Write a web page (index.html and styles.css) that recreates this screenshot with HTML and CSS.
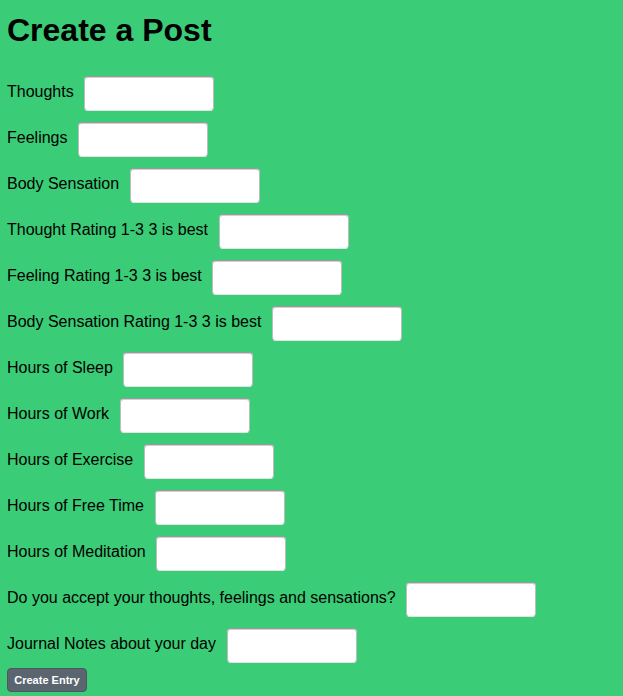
FILE: index.html
```html
<!DOCTYPE html>
<html>
<head>
<meta charset="utf-8">
<title>Create a Post</title>
<link rel="stylesheet" href="styles.css">
</head>
<body>
<h1 class="title">Create a Post</h1>
<form class="post-form">
  <div class="row"><label class="lbl">Thoughts</label><input class="field" type="text"></div>
  <div class="row"><label class="lbl">Feelings</label><input class="field" type="text"></div>
  <div class="row"><label class="lbl">Body Sensation</label><input class="field" type="text"></div>
  <div class="row"><label class="lbl">Thought Rating 1-3 3 is best</label><input class="field" type="text"></div>
  <div class="row"><label class="lbl">Feeling Rating 1-3 3 is best</label><input class="field" type="text"></div>
  <div class="row"><label class="lbl">Body Sensation Rating 1-3 3 is best</label><input class="field" type="text"></div>
  <div class="row"><label class="lbl">Hours of Sleep</label><input class="field" type="text"></div>
  <div class="row"><label class="lbl">Hours of Work</label><input class="field" type="text"></div>
  <div class="row"><label class="lbl">Hours of Exercise</label><input class="field" type="text"></div>
  <div class="row"><label class="lbl">Hours of Free Time</label><input class="field" type="text"></div>
  <div class="row"><label class="lbl">Hours of Meditation</label><input class="field" type="text"></div>
  <div class="row"><label class="lbl">Do you accept your thoughts, feelings and sensations?</label><input class="field" type="text"></div>
  <div class="row"><label class="lbl">Journal Notes about your day</label><input class="field" type="text"></div>
  <div class="actions"><button class="btn" type="button">Create Entry</button></div>
</form>
</body>
</html>
```
FILE: styles.css
```css
html, body {
  margin: 0;
  background: #3acc76;
}
body {
  padding: 12px 7px 0 7px;
  font-family: "Liberation Sans", Arial, Helvetica, sans-serif;
  color: #000;
}
.title {
  margin: 0;
  font-size: 32px;
  line-height: 37px;
  font-weight: bold;
}
.post-form {
  margin-top: 27px;
  display: flex;
  flex-direction: column;
  gap: 11px;
}
.row {
  display: flex;
  align-items: flex-start;
  gap: 10.6px;
  height: 35px;
}
.lbl {
  font-size: 16px;
  line-height: 31px;
}
.field {
  box-sizing: border-box;
  width: 130px;
  height: 35px;
  margin: 0;
  background: #fff;
  border: 1px solid #bdbdbd;
  border-top-color: #9a9a9a;
  border-bottom-color: #e4e4e4;
  border-radius: 4px;
  box-shadow: inset 0 1px 0 #d0d0d0;
}
.actions {
  margin-top: -6px;
}
.btn {
  box-sizing: border-box;
  width: 80px;
  height: 24px;
  padding: 0;
  background: #5b6570;
  color: #fff;
  border: 1px solid #4e5760;
  border-radius: 4px;
  font-family: "Liberation Sans", Arial, Helvetica, sans-serif;
  font-weight: bold;
  font-size: 11px;
}
```
